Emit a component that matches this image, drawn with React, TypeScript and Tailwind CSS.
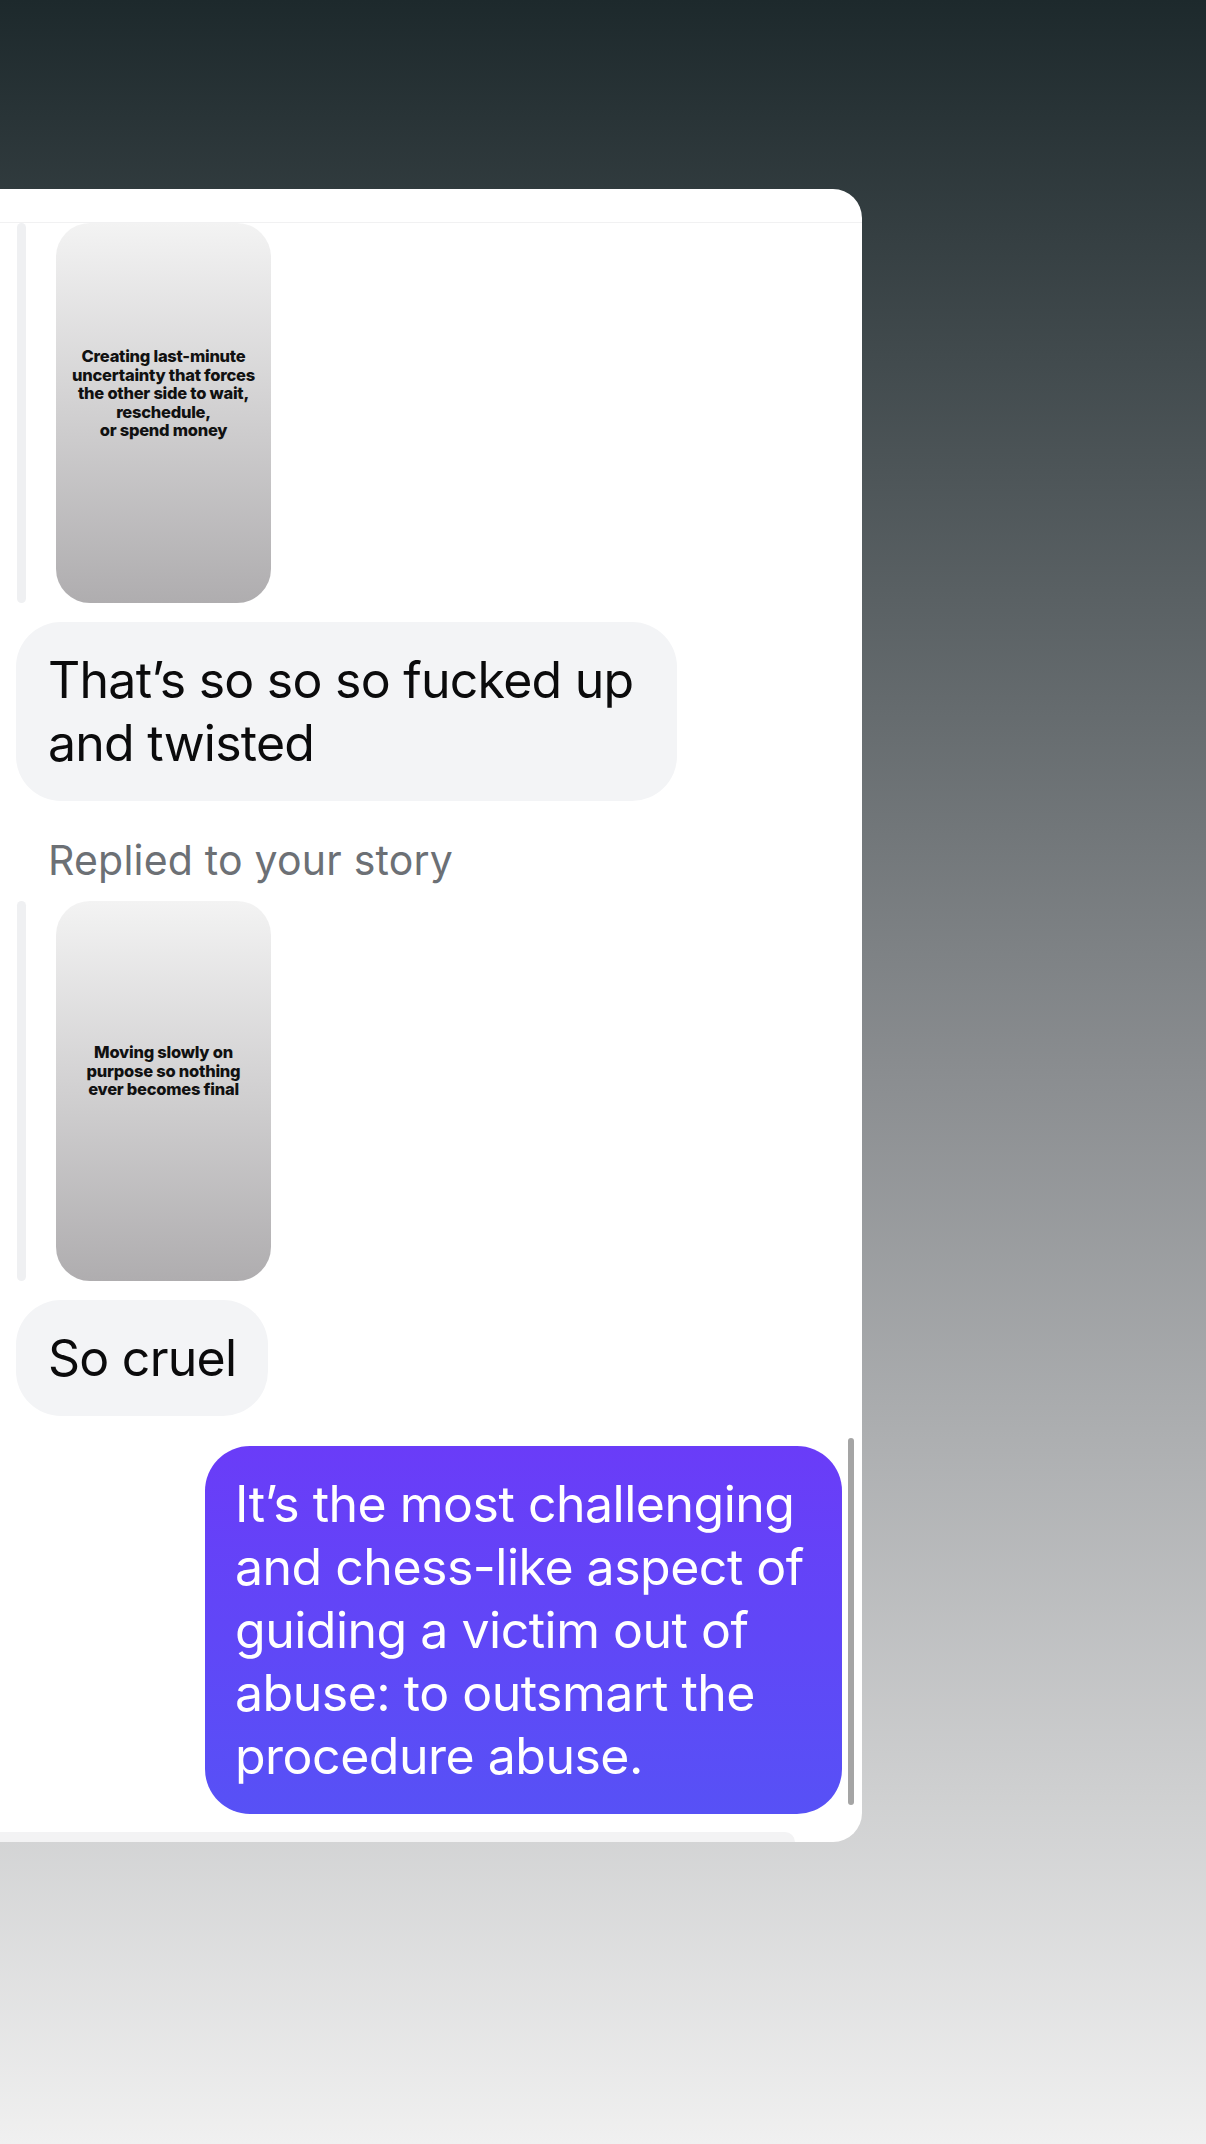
import React from "react";

function Story({ lines, padTop }: { lines: string[]; padTop: string }) {
  return (
    <div className="flex">
      <div className="ml-px w-[9px] rounded-full bg-[#eff0f2]" />
      <div
        className={`ml-[30px] w-[215px] h-[380px] rounded-[34px] bg-linear-to-b/srgb from-[#f3f3f3] to-[#afadaf] flex flex-col items-center ${padTop}`}
      >
        {lines.map((l, i) => (
          <div
            key={i}
            className="text-[16.5px] leading-[18.5px] font-extrabold text-[#111] tracking-[-0.015em] text-center whitespace-nowrap font-[Inter,sans-serif]"
          >
            {l}
          </div>
        ))}
      </div>
    </div>
  );
}

export default function App() {
  return (
    <div className="w-full h-[2144px] bg-linear-to-b/srgb from-[#1d292c] via-[#8a8d90] via-50% to-[#f0f0f0] pt-[189px] font-[Inter,sans-serif]">
      <div className="relative w-[862px] h-[1653px] bg-white rounded-r-[29px] overflow-hidden flex flex-col">
        <div className="h-[34px] shrink-0 border-b border-[#f1f1f2]" />
        <div className="flex-1 flex flex-col pl-[16px]">
          <Story
            padTop="pt-[124px]"
            lines={[
              "Creating last-minute",
              "uncertainty that forces",
              "the other side to wait,",
              "reschedule,",
              "or spend money",
            ]}
          />
          <div className="mt-[19px] self-start w-[661px] rounded-[45px] bg-[#f3f4f6] px-[32px] py-[26.5px] text-[50px] leading-[63px] text-[#0b0b0c] tracking-[-0.015em]">
            <div className="whitespace-nowrap">That’s so so so fucked up</div>
            <div className="whitespace-nowrap">and twisted</div>
          </div>
          <div className="mt-[35px] pl-[32px] text-[41px] leading-[48px] text-[#6c7075] tracking-[0.005em]">
            Replied to your story
          </div>
          <div className="mt-[17px]">
            <Story
              padTop="pt-[142px]"
              lines={["Moving slowly on", "purpose so nothing", "ever becomes final"]}
            />
          </div>
          <div className="mt-[19px] self-start rounded-[45px] bg-[#f3f4f6] px-[32px] py-[26.5px] text-[50px] leading-[63px] text-[#0b0b0c] tracking-[-0.015em] whitespace-nowrap">
            So cruel
          </div>
          <div className="mt-[30px] self-end mr-[20px] w-[637px] rounded-[45px] bg-linear-to-b/srgb from-[#6a3cf8] to-[#5751f6] px-[30px] py-[26.5px] text-[50px] leading-[63px] text-white tracking-[-0.01em]">
            <div className="whitespace-nowrap">It’s the most challenging</div>
            <div className="whitespace-nowrap">and chess-like aspect of</div>
            <div className="whitespace-nowrap">guiding a victim out of</div>
            <div className="whitespace-nowrap">abuse: to outsmart the</div>
            <div className="whitespace-nowrap">procedure abuse.</div>
          </div>
        </div>
        <div className="h-[10px] w-[795px] shrink-0 bg-[#f3f3f4] rounded-tr-[14px]" />
        <div className="absolute left-[848px] top-[1249px] w-[6px] h-[367px] rounded-full bg-[#a5a5a5]" />
      </div>
    </div>
  );
}
